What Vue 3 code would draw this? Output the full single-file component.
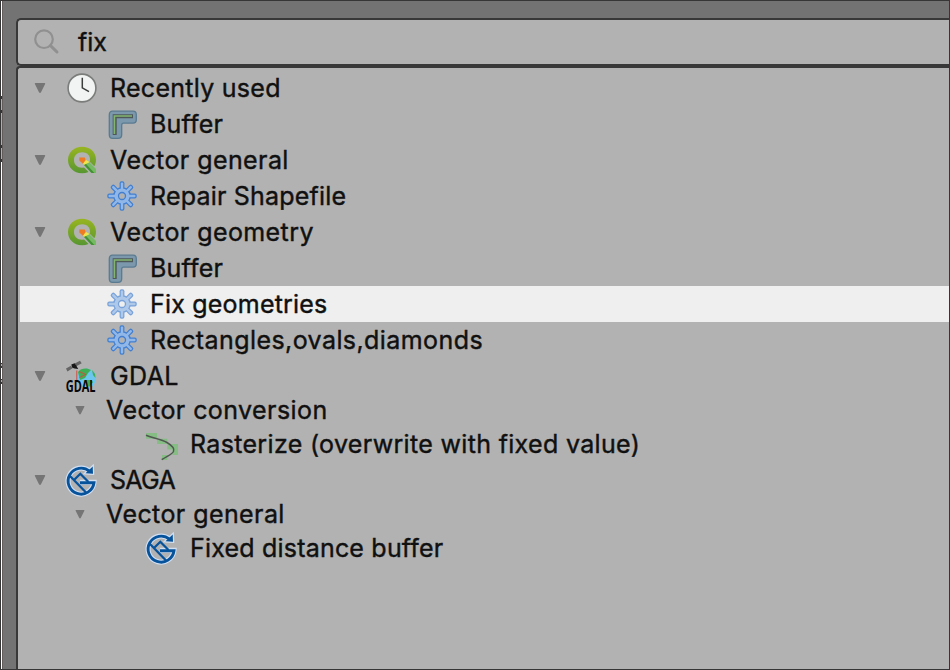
<script setup>
const rows = [
  { level: 1, icon: 'clock', text: 'Recently used', fit: 'recent', open: true },
  { level: 2, icon: 'buffer', text: 'Buffer', fit: 'snug' },
  { level: 1, icon: 'qgis', text: 'Vector general', fit: 'loose', open: true },
  { level: 2, icon: 'gear', text: 'Repair Shapefile', fit: 'snug' },
  { level: 1, icon: 'qgis', text: 'Vector geometry', fit: 'loose', open: true },
  { level: 2, icon: 'buffer', text: 'Buffer', fit: 'snug' },
  { level: 2, icon: 'gear', text: 'Fix geometries', fit: 'snug', selected: true },
  { level: 2, icon: 'gear', text: 'Rectangles,ovals,diamonds', fit: 'loose' },
  { level: 1, icon: 'gdal', text: 'GDAL', fit: 'loose', open: true },
  { level: 2, text: 'Vector conversion', fit: 'loose', open: true, plain: true },
  { level: 3, icon: 'raster', text: 'Rasterize (overwrite with fixed value)', fit: 'medium' },
  { level: 1, icon: 'saga', text: 'SAGA', fit: 'tight', open: true },
  { level: 2, text: 'Vector general', fit: 'loose', open: true, plain: true },
  { level: 3, icon: 'saga', text: 'Fixed distance buffer', fit: 'snug' },
]
const teeth = [0, 45, 90, 135, 180, 225, 270, 315]
</script>

<template>
  <div class="window">
    <div class="edge">
      <i class="g1"></i><i class="mark m1"></i><i class="mark m2"></i><i class="mark m3"></i>
      <i class="g2"></i><i class="mark m4"></i><i class="g3"></i><i class="mark m4"></i>
    </div>
    <div class="panel">
      <div class="search">
        <svg class="lens" width="28" height="28" viewBox="0 0 28 28">
          <circle cx="11" cy="11.2" r="8.8" />
          <path d="M17.5 17.7 L24 24" />
        </svg>
        <span class="query">fix</span>
      </div>
      <div class="tree">
        <div v-for="(row, i) in rows" :key="i" class="row" :class="['level' + row.level, { selected: row.selected, plain: row.plain }]">
          <span class="toggle">
            <svg v-if="row.open" width="12" height="12" :viewBox="row.plain ? '-1 -1.2 14 14' : '0 0 12 12'">
              <path d="M1.5 1 H10.5 Q11.6 1 11.1 2 L7 10.3 Q6 11.9 5 10.3 L0.9 2 Q0.4 1 1.5 1 Z" />
            </svg>
          </span>
          <svg v-if="row.icon" class="icon" width="32" height="32" viewBox="0 0 32 32">
            <g v-if="row.icon === 'clock'">
              <circle cx="16" cy="16" r="13.9" fill="#f1f4f3" stroke="#7b7d7a" stroke-width="1.6" />
              <path d="M16.3 5.7 V15.8 L23 19.7" fill="none" stroke="#3c3e3e" stroke-width="1.5" />
            </g>
            <g v-else-if="row.icon === 'buffer'">
              <path d="M6.5 3.2 H27 Q30.3 3.2 30.3 6.7 V11.7 Q30.3 15.1 27 15.1 H17.5 Q15.7 15.1 15.7 17.2 V26.7 Q15.7 30.3 12 30.3 H6.5 Q3.3 30.3 3.3 26.7 V6.7 Q3.3 3.2 6.5 3.2 Z" fill="#7b98ac" stroke="#5a7a90" stroke-width="1.3" />
              <path d="M8.7 27 V8.3 H27" fill="none" stroke="#4f5858" stroke-width="4" />
              <path d="M8.4 26 V8 H26" fill="none" stroke="#83b571" stroke-width="1.7" />
            </g>
            <g v-else-if="row.icon === 'qgis'">
              <defs>
                <linearGradient id="qg" x1="0" y1="0" x2="0" y2="1">
                  <stop offset="0" stop-color="#98b520" />
                  <stop offset="1" stop-color="#589632" />
                </linearGradient>
              </defs>
              <path fill="url(#qg)" d="M16 2.7 C24 2.7 30 8 30 15.7 C30 18.3 29.3 20.6 28.3 22.2 L23.8 17.8 C25 12.5 21.8 8.3 16.2 8.3 C11.2 8.3 8 11.5 8 16 C8 20.7 11.2 23.7 16 23.7 L18 23.6 L22.6 28 C20.6 28.8 18.3 29.2 15.8 29.2 C7.7 29.2 2 23.3 2 16 C2 8.5 8 2.7 16 2.7 Z" />
              <path d="M17.6 20.5 L23 18 L30 25 V29 H25.5 Z" fill="#76bb63" />
              <path d="M17.6 20.5 L19.6 19.6 L28.4 29 H25.5 Z" fill="#439134" />
              <path d="M18.5 15 L22.8 17.6 L23 18.5 L17.8 21 L17 19 Z" fill="#ece64b" />
              <path d="M13.3 13.5 H18.8 L19.8 16 L16.9 19.8 L13.3 16.6 Z" fill="#ee7b22" />
            </g>
            <g v-else-if="row.icon === 'gear'" :class="{ faded: row.selected }">
              <g fill="#427fd0">
                <rect v-for="a in teeth" :key="a" x="13.6" y="1.3" width="4.8" height="9" rx="1.9" :transform="`rotate(${a} 16 16)`" />
                <circle cx="16" cy="16" r="8.9" />
              </g>
              <g fill="#90b7e8">
                <rect v-for="a in teeth" :key="a" x="14.8" y="2.5" width="2.4" height="9" rx="1" :transform="`rotate(${a} 16 16)`" />
                <circle cx="16" cy="16" r="7.6" />
              </g>
              <circle cx="16" cy="16" r="3.5" :fill="row.selected ? '#efefef' : '#b2b2b2'" stroke="#427fd0" stroke-width="1.3" />
            </g>
            <g v-else-if="row.icon === 'gdal'">
              <circle cx="20.3" cy="18.3" r="9.8" fill="#6dc6ee" />
              <path d="M12 12 Q15 8 21 8.6 L25 10 L22 13 L19 18 L14 20 Z M26 10 L29 14 L29.5 18 L27 15 Z M20 20 L25 20 L27 22 L23 27 L20 23 Z" fill="#3fae54" />
              <path d="M10.8 10.5 V21 M13 11.5 L20 14.5 L13.5 17.5" stroke="#d94a3d" stroke-width="1" fill="none" />
              <path d="M0 8.5 L5 5.8 L6.6 8.3 L1.4 11.4 Z M8.7 3.5 L14 0.8 L15.7 3.3 L10.4 6.3 Z" fill="#656565" />
              <path d="M5.3 4.5 L8.6 3.3 L10.2 5.5 L12.2 9 L8.6 8.4 L6.3 7.8 Z" fill="#171717" />
              <text x="-0.3" y="31.6" class="gdal-text" textLength="29.8" lengthAdjust="spacingAndGlyphs">GDAL</text>
            </g>
            <g v-else-if="row.icon === 'raster'">
              <path d="M0 5 H11 V10.7 H21.3 V16 H32 V27 H26.5 V21.5 H21.3 V16 H11 V10.7 H0 Z M16 27 H21.3 V32 H16 Z" fill="#85bd84" />
              <path d="M0 7.3 C6 10 14 10.5 21 14.5 C26 17.5 29 20 27.5 23.5 C26 26.5 21 28 15.7 31.7" fill="none" stroke="#505650" stroke-width="1.5" />
            </g>
            <g v-else>
              <path d="M23.5 7.2 A13 13 0 1 0 28 18.3 H14" fill="none" stroke="#d2e0f4" stroke-width="5" />
              <path d="M19.5 9.3 L27 9.8 L26.7 2.5 Z" fill="#d2e0f4" stroke="#d2e0f4" stroke-width="2.4" />
              <path d="M23.5 7.2 A13 13 0 1 0 28 18.8 H14" fill="none" stroke="#06529b" stroke-width="2.9" />
              <path d="M19.5 9.3 L27 9.8 L26.7 2.5 Z" fill="#06529b" />
              <path d="M3.5 11.5 L20 28.5 M8 16 L14.3 9.8 L22.5 18" fill="none" stroke="#06529b" stroke-width="2.3" />
            </g>
          </svg>
          <span class="label" :class="row.fit">{{ row.text }}</span>
        </div>
      </div>
    </div>
  </div>
</template>

<style>
body { margin: 0; overflow: hidden; }
</style>

<style scoped>
.window {
  box-sizing: border-box;
  width: 950px;
  height: 670px;
  display: flex;
  background: #737373;
  border: 1px solid #363636;
  overflow: hidden;
  font-family: Inter, "Liberation Sans", sans-serif;
  font-size: 25px;
  color: #101010;
}
.edge {
  box-sizing: border-box;
  width: 2px;
  height: 668px;
  flex: none;
  background: #fff;
  border-right: 1px solid #605c5c;
  display: flex;
  flex-direction: column;
}
.edge i { flex: none; width: 1px; }
.g1 { height: 95px; }
.g2 { height: 201px; }
.g3 { height: 11px; }
.mark { background: #e89595; border: 0 solid #333; border-top-width: 3px; box-sizing: border-box; }
.m1 { height: 14px; }
.m2 { height: 35px; }
.m3 { height: 17px; border-bottom-width: 3px; }
.m4 { height: 5px; border-width: 1px 0 2px; }
.panel { flex: 1; padding: 17px 0 0 13px; min-width: 0; display: flex; flex-direction: column; }
.search {
  box-sizing: border-box;
  flex: none;
  height: 48px;
  border: 2px solid #383838;
  border-right: 0;
  border-radius: 5px 0 0 5px;
  background: #b2b2b2;
  display: flex;
  align-items: center;
  padding-left: 15px;
}
.lens { flex: none; fill: none; stroke: #909090; stroke-width: 2.2; }
.lens path { stroke-width: 3; stroke-linecap: round; }
.query { margin-left: 17px; -webkit-text-stroke: 0.4px #101010; }
.tree {
  box-sizing: border-box;
  flex: 1;
  border: 2px solid #383838;
  border-right: 0;
  border-bottom: 0;
  border-radius: 4px 0 0 0;
  background: #b2b2b2;
  padding: 2px 0 0 2px;
}
.row { display: flex; align-items: center; height: 36px; white-space: nowrap; }
.row.plain { height: 32px; }
.row.selected { background: #efefef; }
.toggle { flex: none; width: 32px; height: 12px; margin-left: 14px; }
.toggle svg { display: block; fill: #757575; }
.level2 .toggle { margin-left: 54px; }
.level3 .toggle { margin-left: 94px; }
.icon { flex: none; margin-right: 12px; overflow: visible; }
.faded { opacity: 0.68; }
.label { -webkit-text-stroke: 0.4px #101010; }
.snug { letter-spacing: 0.2px; }
.recent { letter-spacing: 0.27px; }
.medium { letter-spacing: 0.33px; }
.loose { letter-spacing: 0.42px; }
.tight { letter-spacing: -0.7px; }
.gdal-text { font: bold 16px "Open Sans", sans-serif; fill: #080808; }
</style>
